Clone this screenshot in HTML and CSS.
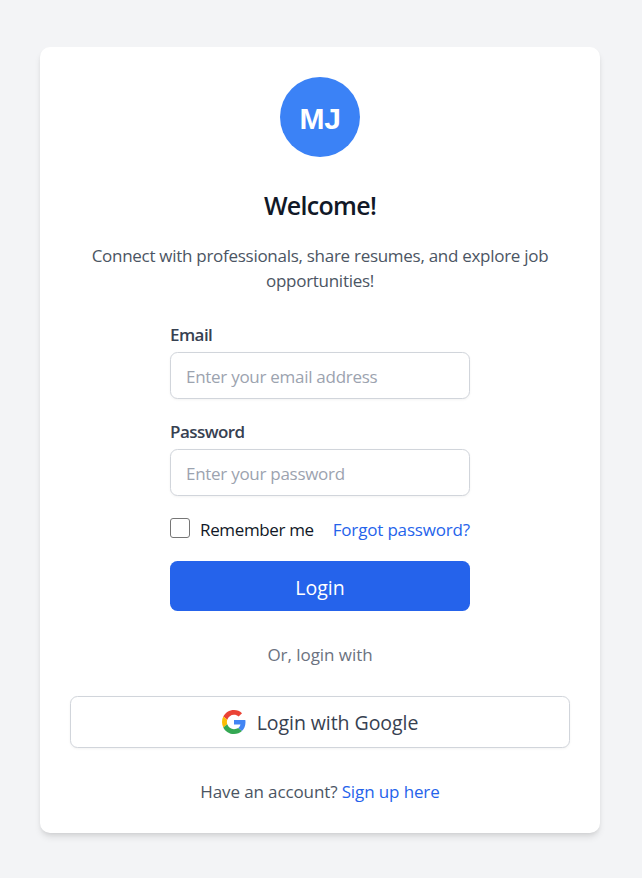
FILE: index.html
```html
<!DOCTYPE html>
<html lang="en">
<head>
<meta charset="utf-8">
<title>Login</title>
<link rel="stylesheet" href="styles.css">
</head>
<body>
<main class="card">
  <div class="avatar">MJ</div>
  <h1 class="title">Welcome!</h1>
  <p class="intro">Connect with professionals, share resumes, and explore job<br>opportunities!</p>
  <form class="form">
    <label class="label" for="email">Email</label>
    <input class="input" id="email" type="email" placeholder="Enter your email address">
    <label class="label" for="password">Password</label>
    <input class="input" id="password" type="password" placeholder="Enter your password">
    <div class="options">
      <label class="remember"><input class="check" type="checkbox"><span>Remember me</span></label>
      <a class="link forgot" href="#">Forgot password?</a>
    </div>
    <button class="submit" type="button">Login</button>
  </form>
  <p class="divider">Or, login with</p>
  <button class="google" type="button">
    <svg class="google-icon" viewBox="0 0 48 48" aria-hidden="true">
      <path fill="#EA4335" d="M24 9.5c3.54 0 6.71 1.22 9.21 3.6l6.85-6.85C35.9 2.38 30.47 0 24 0 14.62 0 6.51 5.38 2.56 13.22l7.98 6.19C12.43 13.72 17.74 9.5 24 9.5z"/>
      <path fill="#4285F4" d="M46.98 24.55c0-1.57-.15-3.09-.38-4.55H24v9.02h12.94c-.58 2.96-2.26 5.48-4.78 7.18l7.73 6c4.51-4.18 7.09-10.36 7.09-17.65z"/>
      <path fill="#FBBC05" d="M10.53 28.59c-.48-1.45-.76-2.99-.76-4.59s.27-3.14.76-4.59l-7.98-6.19C.92 16.46 0 20.12 0 24s.92 7.54 2.56 10.78l7.97-6.19z"/>
      <path fill="#34A853" d="M24 48c6.48 0 11.93-2.13 15.89-5.81l-7.73-6c-2.15 1.45-4.92 2.3-8.16 2.3-6.26 0-11.57-4.22-13.47-9.91l-7.98 6.19C6.51 42.62 14.62 48 24 48z"/>
    </svg>
    <span>Login with Google</span>
  </button>
  <p class="signup"><span>Have an account?</span> <a class="link" href="#">Sign up here</a></p>
</main>
</body>
</html>
```
FILE: styles.css
```css
* { box-sizing: border-box; }
body {
  margin: 0;
  height: 878px;
  padding: 47px 0 0 40px;
  background: #f3f4f6;
  color: #111827;
  font: 400 17px/25px "Segoe UI", "Open Sans", sans-serif;
  letter-spacing: -0.28px;
}
h1, p { margin: 0; }
button, input { font: inherit; letter-spacing: inherit; }
.card {
  display: flex;
  flex-direction: column;
  align-items: center;
  width: 560px;
  height: 786px;
  padding: 30px;
  background: #fff;
  border-radius: 10px;
  box-shadow: 0 5px 7.5px -1px rgba(0,0,0,.1), 0 2.5px 5px -2.5px rgba(0,0,0,.1);
}
.card > * { flex-shrink: 0; }
.avatar {
  display: flex;
  align-items: center;
  justify-content: center;
  width: 80px;
  height: 80px;
  padding-top: 2px;
  border-radius: 50%;
  background: #3b82f6;
  color: #fff;
  font-family: "Segoe UI", "Liberation Sans", sans-serif;
  font-size: 30px;
  font-weight: 700;
}
.title { margin-top: 28px; font-size: 25px; line-height: 40px; font-weight: 550; letter-spacing: -0.7px; }
.intro { margin-top: 18px; text-align: center; color: #4b5563; white-space: nowrap; }
.form { display: flex; flex-direction: column; width: 300px; margin-top: 29px; }
.label { color: #374151; font-size: 17px; font-weight: 600; letter-spacing: -0.55px; }
.input {
  width: 100%;
  height: 47px;
  margin: 5px 0 20px;
  padding: 1px 15px 0;
  border: 1px solid #d1d5db;
  border-radius: 7.5px;
  background: #fff;
  box-shadow: 0 1px 2.5px rgba(0,0,0,.05);
}
.input::placeholder { color: #9ca3af; opacity: 1; }
.options { display: flex; justify-content: space-between; height: 25px; margin-top: 1px; white-space: nowrap; }
.remember { display: flex; gap: 10px; letter-spacing: -0.35px; }
.forgot { letter-spacing: -0.17px; }
.check {
  appearance: none;
  width: 20px;
  height: 20px;
  margin: 1px 0 0;
  border: 1.25px solid #767676;
  border-radius: 3px;
  background: #fff;
}
.link { color: #2563eb; text-decoration: none; }
.submit {
  height: 50px;
  margin-top: 19px;
  padding: 2px 0 0;
  border: 0;
  border-radius: 7.5px;
  background: #2563eb;
  color: #fff;
  font-size: 19.5px;
  letter-spacing: 0;
}
.divider { margin-top: 31px; color: #6b7280; letter-spacing: -0.05px; }
.google {
  display: flex;
  align-items: center;
  justify-content: center;
  gap: 11px;
  width: 100%;
  height: 52px;
  margin-top: 29px;
  padding-top: 0;
  border: 1px solid #d1d5db;
  border-radius: 7.5px;
  background: #fff;
  color: #374151;
  font-size: 19.5px;
  letter-spacing: -0.06px;
  box-shadow: 0 1px 2.5px rgba(0,0,0,.05);
}
.google span { padding-top: 1px; }
.google-icon { width: 24px; height: 24px; }
.signup { margin-top: 31px; color: #4b5563; letter-spacing: -0.12px; }
```
